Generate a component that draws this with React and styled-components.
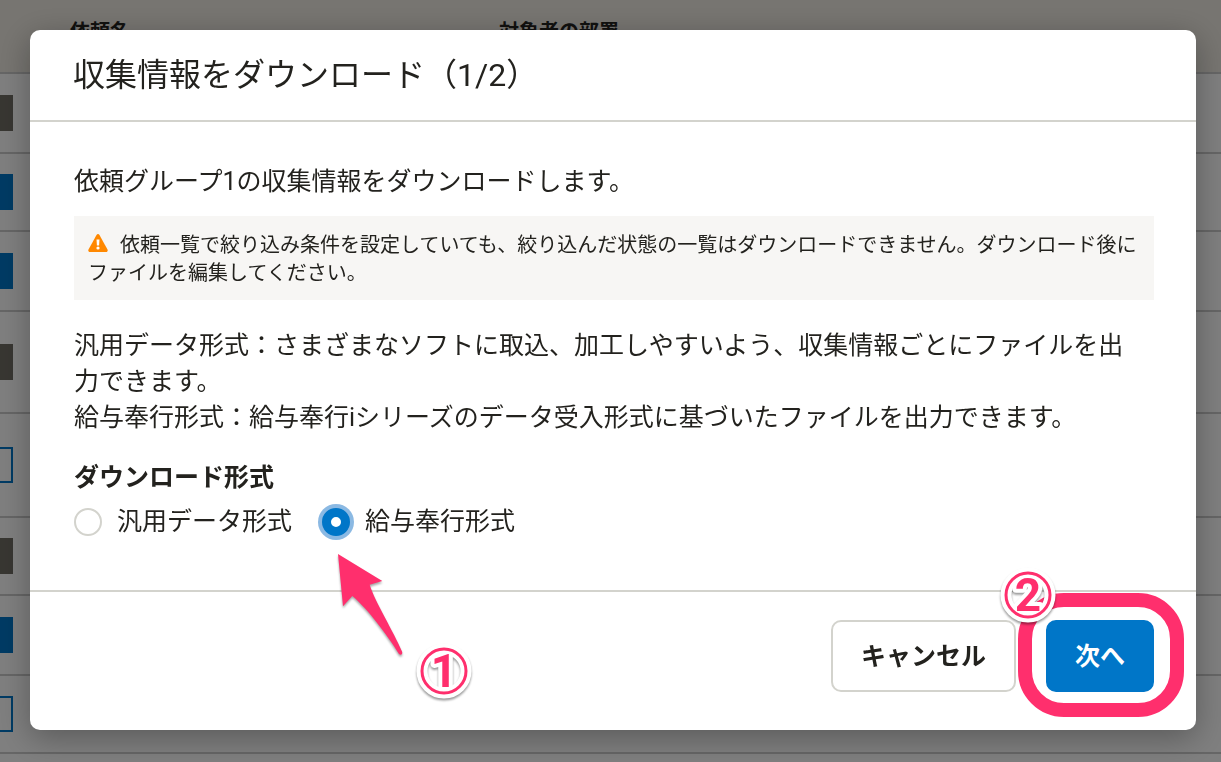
import { useState } from "react";
import styled, { createGlobalStyle, css } from "styled-components";

const pink = "#ff2f6d";
const blue = "#0076c8";

const GlobalStyle = createGlobalStyle`
  * {
    box-sizing: border-box;
  }
  body {
    margin: 0;
    background: #fff;
    color: #23221e;
    font-family: Roboto, "Noto Sans CJK JP", sans-serif;
    font-size: 25px;
    line-height: 36px;
    overflow: hidden;
  }
`;

const RequestTable = styled.table`
  width: 100%;
  border-collapse: separate;
  border-spacing: 0;
  table-layout: fixed;
`;

const HeadCell = styled.th`
  width: ${({ $width }) => $width || "auto"};
  height: 74px;
  padding: 18px 0 0;
  background: #eeeae2;
  border-bottom: 2px solid #ccc;
  font-size: 20px;
  line-height: 28px;
  font-weight: 700;
  text-align: left;
  vertical-align: top;
`;

const Cell = styled.td`
  height: ${({ $height }) => $height}px;
  padding: 0;
  border-bottom: 2px solid #ccc;
  vertical-align: middle;
`;

const statusStyles = {
  done: css`
    background: #706d64;
  `,
  active: css`
    background: ${blue};
  `,
  outline: css`
    border: 2px solid ${blue};
    border-left: 0;
  `,
};

const Status = styled.span`
  display: block;
  width: 13px;
  height: 36px;
  ${({ $kind }) => statusStyles[$kind]}
`;

const Overlay = styled.div`
  position: fixed;
  inset: 0;
  display: flex;
  align-items: flex-start;
  padding: 30px 25px 32px 30px;
  background: rgba(0, 0, 0, 0.5);
`;

const Dialog = styled.section`
  flex: 1;
  min-width: 0;
  background: #fff;
  border-radius: 10px;
  box-shadow: 0 8px 32px rgba(0, 0, 0, 0.3);
`;

const DialogHeader = styled.header`
  padding: 23px 43px;
  border-bottom: 2px solid #d3d3cd;
`;

const Title = styled.h1`
  margin: 0;
  font-size: 32px;
  line-height: 44px;
  font-weight: 400;
`;

const DialogBody = styled.div`
  padding: 42px 42px 50px 44px;
`;

const Lead = styled.p`
  margin: 0;
`;

const Notice = styled.p`
  margin: 16px 0 28px;
  padding: 15px 12px 13px 14px;
  background: #f7f6f4;
  font-size: 20px;
  line-height: 28px;
`;

const WarningIcon = styled.svg`
  width: 20px;
  height: 18px;
  margin-right: 12px;
`;

const Description = styled.p`
  margin: 0;
  padding-right: 8px;
`;

const FormatGroup = styled.fieldset`
  min-width: 0;
  margin: 24px 0 0;
  padding: 0;
  border: 0;
`;

const FormatLegend = styled.legend`
  margin-bottom: 8px;
  padding: 0;
  font-weight: 700;
`;

const Options = styled.div`
  display: flex;
  flex-wrap: wrap;
  gap: 30px;
`;

const Option = styled.div`
  position: relative;
  display: flex;
  align-items: center;
  gap: 15px;
`;

const Radio = styled.input`
  appearance: none;
  width: 28px;
  height: 28px;
  margin: 0;
  border: 2px solid #d3d3cd;
  border-radius: 50%;
  background: #fff;

  &:checked {
    border: 9px solid ${blue};
    box-shadow: 0 0 0 4px #8bb9e3;
  }
`;

const DialogFooter = styled.footer`
  display: flex;
  justify-content: flex-end;
  gap: 30px;
  padding: 28px 42px 38px;
  border-top: 2px solid #d3d3cd;
`;

const Button = styled.button`
  height: 72px;
  padding: 2px ${({ $primary }) => ($primary ? 27 : 28)}px 0;
  border: 2px solid ${({ $primary }) => ($primary ? blue : "#d3d3cd")};
  border-radius: 10px;
  background: ${({ $primary }) => ($primary ? blue : "#fff")};
  color: ${({ $primary }) => ($primary ? "#fff" : "inherit")};
  font: inherit;
  font-weight: 700;
`;

const Highlighted = styled.div`
  position: relative;
`;

const HighlightRing = styled.span`
  position: absolute;
  inset: -27px -30px -25px -28px;
  border: 14px solid ${pink};
  border-radius: 46px;
  pointer-events: none;
`;

const MarkerSvg = styled.svg`
  position: absolute;
  left: ${({ $left }) => $left}px;
  top: ${({ $top }) => $top}px;
  width: 64px;
  height: 64px;
  pointer-events: none;
`;

const MarkerOutline = styled.g`
  filter: drop-shadow(0 2px 1px rgba(0, 0, 0, 0.4));
`;

const MarkerText = styled.text`
  font-family: Roboto, sans-serif;
  font-size: 46px;
  font-weight: 700;
  text-anchor: middle;
`;

const Arrow = styled.svg`
  position: absolute;
  left: 8px;
  top: 42px;
  width: 80px;
  height: 116px;
  pointer-events: none;
  filter: drop-shadow(0 2px 1px rgba(0, 0, 0, 0.35));
`;

const rows = [
  { kind: "done", height: 80 },
  { kind: "active", height: 78 },
  { kind: "active", height: 80 },
  { kind: "done", height: 102 },
  { kind: "outline", height: 104 },
  { kind: "done", height: 78 },
  { kind: "active", height: 80 },
  { kind: "outline", height: 78 },
];

const formats = [
  { id: "general", label: "汎用データ形式" },
  { id: "bugyo", label: "給与奉行形式" },
];

function Marker({ number, left, top }) {
  return (
    <MarkerSvg viewBox="0 0 64 64" $left={left} $top={top}>
      <MarkerOutline>
        <circle cx="32" cy="32" r="22" fill="none" stroke="#fff" strokeWidth="11" />
        <MarkerText
          x="32"
          y="48"
          fill="#fff"
          stroke="#fff"
          strokeWidth="8"
          strokeLinejoin="round"
          aria-hidden="true"
        >
          {number}
        </MarkerText>
      </MarkerOutline>
      <circle cx="32" cy="32" r="22" fill="none" stroke={pink} strokeWidth="3" />
      <MarkerText x="32" y="48" fill={pink}>
        {number}
      </MarkerText>
    </MarkerSvg>
  );
}

function App() {
  const [format, setFormat] = useState("bugyo");

  return (
    <>
      <GlobalStyle />
      <RequestTable>
        <thead>
          <tr>
            <HeadCell $width="70px" />
            <HeadCell $width="429px">依頼名</HeadCell>
            <HeadCell>対象者の部署</HeadCell>
          </tr>
        </thead>
        <tbody>
          {rows.map((row, index) => (
            <tr key={index}>
              <Cell $height={row.height}>
                <Status $kind={row.kind} />
              </Cell>
              <Cell />
              <Cell />
            </tr>
          ))}
        </tbody>
      </RequestTable>

      <Overlay>
        <Dialog role="dialog" aria-modal="true" aria-labelledby="dialog-title">
          <DialogHeader>
            <Title id="dialog-title">収集情報をダウンロード（1/2）</Title>
          </DialogHeader>
          <DialogBody>
            <Lead>依頼グループ1の収集情報をダウンロードします。</Lead>
            <Notice>
              <WarningIcon viewBox="0 0 20 18" aria-hidden="true">
                <path
                  d="M8.5 1C9.2-.2 10.8-.2 11.5 1l8 14.6c.6 1.2-.1 2.4-1.4 2.4H1.900C.6 18-.1 16.800.5 15.6z"
                  fill="#ff8800"
                />
                <path d="M8.500 5.500h3l-.4 6H8.900z" fill="#fff" />
                <circle cx="10" cy="14" r="1.600" fill="#fff" />
              </WarningIcon>
              依頼一覧で絞り込み条件を設定していても、絞り込んだ状態の一覧はダウンロードできません。ダウンロード後にファイルを編集してください。
            </Notice>
            <Description>
              汎用データ形式：さまざまなソフトに取込、加工しやすいよう、収集情報ごとにファイルを出力できます。
              <br />
              給与奉行形式：給与奉行iシリーズのデータ受入形式に基づいたファイルを出力できます。
            </Description>
            <FormatGroup>
              <FormatLegend>ダウンロード形式</FormatLegend>
              <Options>
                {formats.map(({ id, label }) => (
                  <Option key={id}>
                    <Radio
                      type="radio"
                      name="format"
                      id={id}
                      checked={format === id}
                      onChange={() => setFormat(id)}
                    />
                    <label htmlFor={id}>{label}</label>
                    {id === "bugyo" && (
                      <>
                        <Arrow viewBox="0 0 80 116" aria-hidden="true">
                          <path
                            d="M8 8L52.300 35l-12.600 3.700C45 56 64 86 72 105.500c1 2.500-1 4.500-3 2.500C58 90 38 63 22.300 50L13 60.300z"
                            fill={pink}
                          />
                        </Arrow>
                        <Marker number="1" left={90} top={135} />
                      </>
                    )}
                  </Option>
                ))}
              </Options>
            </FormatGroup>
          </DialogBody>
          <DialogFooter>
            <Button type="button">キャンセル</Button>
            <Highlighted>
              <Button type="button" $primary>
                次へ
              </Button>
              <HighlightRing />
              <Marker number="2" left={-50} top={-57} />
            </Highlighted>
          </DialogFooter>
        </Dialog>
      </Overlay>
    </>
  );
}

export default App;
